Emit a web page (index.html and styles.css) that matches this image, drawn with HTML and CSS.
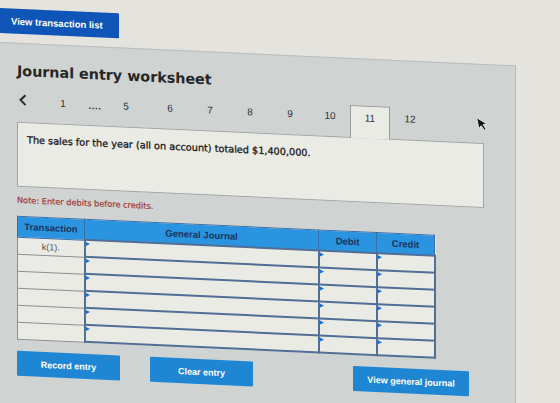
FILE: index.html
```html
<!DOCTYPE html>
<html lang="en">
<head>
<meta charset="utf-8">
<title>Journal entry worksheet</title>
<link rel="stylesheet" href="styles.css">
</head>
<body>
<div class="screen">
  <div class="topbar">
    <button class="btn btn-dark">View transaction list</button>
  </div>

  <section class="panel">
    <h1 class="title">Journal entry worksheet</h1>

    <nav class="tabs">
      <span class="prev">
        <svg width="8" height="12" viewBox="0 0 8 12"><polyline points="6.5,1 1.5,6 6.5,11" fill="none" stroke="#2b2b2b" stroke-width="2"/></svg>
      </span>
      <span class="tab tab-first">1</span>
      <span class="dots">....</span>
      <span class="tab tab-five">5</span>
      <span class="tab">6</span>
      <span class="tab">7</span>
      <span class="tab">8</span>
      <span class="tab">9</span>
      <span class="tab">10</span>
      <span class="tab active">11</span>
      <span class="tab">12</span>
    </nav>

    <div class="prompt">The sales for the year (all on account) totaled $1,400,000.</div>

    <p class="note">Note: Enter debits before credits.</p>

    <table class="journal">
      <thead>
        <tr>
          <th class="c-tr">Transaction</th>
          <th class="c-gj">General Journal</th>
          <th class="c-amt">Debit</th>
          <th class="c-amt">Credit</th>
        </tr>
      </thead>
      <tbody>
        <tr><td class="tr">k(1).</td><td class="inp"><i></i></td><td class="inp"><i></i></td><td class="inp"><i></i></td></tr>
        <tr><td class="tr"></td><td class="inp"><i></i></td><td class="inp"><i></i></td><td class="inp"><i></i></td></tr>
        <tr><td class="tr"></td><td class="inp"><i></i></td><td class="inp"><i></i></td><td class="inp"><i></i></td></tr>
        <tr><td class="tr"></td><td class="inp"><i></i></td><td class="inp"><i></i></td><td class="inp"><i></i></td></tr>
        <tr><td class="tr"></td><td class="inp"><i></i></td><td class="inp"><i></i></td><td class="inp"><i></i></td></tr>
        <tr><td class="tr"></td><td class="inp"><i></i></td><td class="inp"><i></i></td><td class="inp"><i></i></td></tr>
      </tbody>
    </table>

    <div class="actions">
      <button class="btn btn-record">Record entry</button>
      <button class="btn btn-clear">Clear entry</button>
      <button class="btn btn-view">View general journal</button>
    </div>

    <svg class="pointer" width="11" height="16" viewBox="0 0 11 16">
      <path d="M1 1 L1 12 L3.8 9.6 L6 14.5 L8 13.6 L5.9 8.9 L9.6 8.6 Z" fill="#151515" stroke="#f2f2f2" stroke-width="0.8"/>
    </svg>
  </section>
</div>
</body>
</html>
```

FILE: styles.css
```css
html, body {
  margin: 0;
  padding: 0;
  height: 100%;
  overflow: hidden;
  background: #e5e3dd;
}

.screen {
  transform: skewY(2.6deg);
  transform-origin: 0 0;
  font-family: "Liberation Sans", Arial, sans-serif;
}

.topbar {
  height: 42px;
  padding-top: 8px;
  box-sizing: border-box;
}

.btn {
  display: flex;
  align-items: center;
  justify-content: center;
  border: none;
  padding: 0;
  color: #ffffff;
  font-family: "Liberation Sans", Arial, sans-serif;
  font-weight: 700;
  font-size: 9px;
  background: #1f86d4;
  border-radius: 1px;
}

.btn-dark {
  margin-left: -4px;
  width: 123px;
  height: 25px;
  background: #0f55b7;
  font-size: 9.5px;
  justify-content: flex-start;
  padding-left: 15px;
}

.panel {
  position: relative;
  width: 516px;
  height: 361px;
  box-sizing: border-box;
  padding: 0 0 0 17px;
  background: #cfd3d2;
  border-top: 1px solid #b9bdbc;
  border-right: 1px solid #b5b9b8;
}

.title {
  margin: 19px 0 0;
  font-family: "DejaVu Sans", Verdana, sans-serif;
  font-weight: 700;
  font-size: 14.3px;
  line-height: 17px;
  color: #262626;
}

.tabs {
  display: flex;
  align-items: stretch;
  height: 32px;
  margin-top: 10px;
  font-size: 10px;
  color: #2e2e2e;
}

.prev {
  width: 27px;
  padding: 4px 0 0 2px;
  box-sizing: border-box;
}

.tab {
  width: 40px;
  text-align: center;
  padding-top: 6px;
  line-height: 12px;
  box-sizing: border-box;
}

.tab-first { width: 38px; }

.tab-five {
  width: 36px;
  margin-right: 6px;
}

.dots {
  width: 26px;
  text-align: center;
  font-weight: 700;
  font-size: 10px;
  letter-spacing: 0.5px;
  padding-top: 7px;
  line-height: 12px;
  color: #3a3a3a;
}

.tab.active {
  position: relative;
  z-index: 1;
  background: #ebebe6;
  border: 1px solid #9b9e9d;
  border-bottom: none;
  margin-bottom: -1px;
  padding-top: 6px;
}

.prompt {
  width: 467px;
  height: 65px;
  box-sizing: border-box;
  padding: 11px 0 0 9px;
  background: #ebebe6;
  border: 1px solid #a3a6a5;
  font-family: "DejaVu Sans", Verdana, sans-serif;
  font-size: 9.7px;
  line-height: 12px;
  color: #1a1a1a;
  -webkit-text-stroke: 0.3px #1a1a1a;
}

.note {
  margin: 8px 0 0;
  font-family: "DejaVu Sans", Verdana, sans-serif;
  font-size: 8.2px;
  line-height: 10px;
  color: #a53a36;
  -webkit-text-stroke: 0.2px #a53a36;
}

.journal {
  margin-top: 11px;
  border-collapse: collapse;
  table-layout: fixed;
  width: 413px;
  background: #ebebe6;
}

.journal th {
  height: 19px;
  padding: 0;
  background: #2a94e0;
  border: 1px solid #3a6ea8;
  color: #1b345c;
  font-size: 9.5px;
  font-weight: 700;
  text-align: center;
}

.journal th.c-tr { width: 66px; }
.journal th.c-gj { width: 233px; }
.journal th.c-amt { width: 57px; }

.journal td {
  height: 17px;
  padding: 0;
  box-sizing: border-box;
}

.journal td.tr {
  border: 1px solid #8c8f8f;
  text-align: center;
  font-size: 9px;
  color: #505050;
}

.journal td.inp {
  position: relative;
  border: 2px solid #4f6f96;
}

.journal td.inp i {
  position: absolute;
  left: 0;
  top: 1px;
  width: 0;
  height: 0;
  border-top: 2px solid transparent;
  border-bottom: 2px solid transparent;
  border-left: 4px solid #1b6fd0;
}

.actions {
  display: flex;
  margin-top: 11px;
}

.actions .btn { height: 25px; }

.btn-record { width: 103px; }

.btn-clear {
  width: 103px;
  margin-left: 30px;
}

.btn-view {
  width: 116px;
  margin-left: 100px;
}

.pointer {
  position: absolute;
  left: 477px;
  top: 51px;
  transform: rotate(-12deg);
}
```
